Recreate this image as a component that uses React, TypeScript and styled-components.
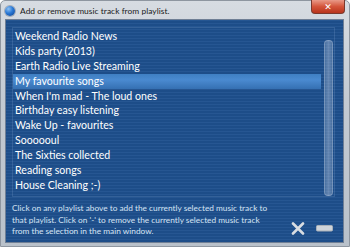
import React from "react";
import styled, { createGlobalStyle } from "styled-components";

const Global = createGlobalStyle`
  html, body { margin: 0; padding: 0; }
  body { width: 350px; height: 247px; overflow: hidden; background: #fff; }
`;

const Window = styled.div`
  width: 350px;
  height: 247px;
  box-sizing: border-box;
  display: flex;
  flex-direction: column;
  background: linear-gradient(180deg, #d7dce2 0%, #c3cad2 40%, #b9c1ca 100%);
  border: 1px solid #8e96a0;
  border-radius: 5px 5px 0 0;
  font-family: Lato, "Noto Sans", sans-serif;
`;

const TitleBar = styled.div`
  height: 18px;
  display: flex;
  align-items: center;
  padding-left: 4px;
  gap: 5px;
`;

const AppIcon = styled.div`
  width: 10px;
  height: 10px;
  border-radius: 50%;
  background: radial-gradient(circle at 35% 30%, #8fc3f5 0%, #2a78d4 45%, #0c3f8c 100%);
  box-shadow: 0 0 0 1px rgba(40, 60, 90, 0.3);
  margin-top: 2px;
`;

const Title = styled.div`
  font-size: 8.4px;
  color: #1a1a1a;
  margin-top: 2px;
  letter-spacing: 0.05px;
`;

const CloseButton = styled.div`
  margin-left: auto;
  align-self: flex-start;
  width: 32px;
  height: 13px;
  margin-top: -1px;
  margin-right: 4px;
  border-radius: 0 0 4px 4px;
  background: linear-gradient(180deg, #e99a88 0%, #d4553b 50%, #b8341c 100%);
  border: 1px solid #7a3a2e;
  border-top: none;
  display: flex;
  align-items: center;
  justify-content: center;
  color: #fff;
  font-family: "DejaVu Sans", sans-serif;
  font-size: 9px;
  font-weight: bold;
`;

const Content = styled.div`
  flex: 1;
  min-height: 0;
  margin: 0 5px 3px 4px;
  border: 1px solid #6f7f95;
  background-color: #1e508e;
  background-image: repeating-linear-gradient(
    180deg,
    rgba(255, 255, 255, 0.035) 0px,
    rgba(255, 255, 255, 0.035) 1px,
    rgba(0, 0, 0, 0.04) 1px,
    rgba(0, 0, 0, 0.04) 3px
  );
  display: flex;
  flex-direction: column;
  padding: 7px 8px 0 6px;
  box-sizing: border-box;
`;

const ListBox = styled.div`
  height: 168px;
  flex: none;
  border: 1px solid rgba(160, 190, 225, 0.18);
  display: flex;
`;

const List = styled.div`
  flex: 1;
  padding-top: 1px;
  display: flex;
  flex-direction: column;
`;

const Row = styled.div<{ $selected?: boolean }>`
  height: 14.9px;
  line-height: 14.9px;
  padding-left: 2px;
  font-size: 10.6px;
  color: #fff;
  white-space: nowrap;
  background: ${(p) =>
    p.$selected
      ? "linear-gradient(180deg, #3f7fc2 0%, #4a8ad0 40%, #3570b2 100%)"
      : "transparent"};
`;

const ScrollTrack = styled.div`
  width: 9px;
  margin: 12px 1px 0 3px;
  display: flex;
  flex-direction: column;
`;

const ScrollThumb = styled.div`
  flex: 1;
  border-radius: 4px;
  background: linear-gradient(90deg, rgba(190, 205, 225, 0.28), rgba(220, 230, 245, 0.38), rgba(190, 205, 225, 0.28));
  border: 1px solid rgba(210, 220, 235, 0.3);
`;

const Footer = styled.div`
  flex: 1;
  display: flex;
  align-items: flex-start;
  padding-top: 6px;
`;

const HelpText = styled.div`
  flex: 1;
  font-size: 8.3px;
  line-height: 11.5px;
  color: #d6e4f4;
  white-space: nowrap;
`;

const Actions = styled.div`
  display: flex;
  align-items: center;
  gap: 11px;
  margin-top: 19px;
  margin-right: 2px;
`;

const IconButton = styled.div`
  display: flex;
  align-items: center;
  justify-content: center;
`;

const items = [
  "Weekend Radio News",
  "Kids party (2013)",
  "Earth Radio Live Streaming",
  "My favourite songs",
  "When I'm mad - The loud ones",
  "Birthday easy listening",
  "Wake Up - favourites",
  "Soooooul",
  "The Sixties collected",
  "Reading songs",
  "House Cleaning ;-)",
];

export default function App() {
  return (
    <>
      <Global />
      <Window>
        <TitleBar>
          <AppIcon />
          <Title>Add or remove music track from playlist.</Title>
          <CloseButton>✕</CloseButton>
        </TitleBar>
        <Content>
          <ListBox>
            <List>
              {items.map((t, i) => (
                <Row key={t} $selected={i === 3}>
                  {t}
                </Row>
              ))}
            </List>
            <ScrollTrack>
              <ScrollThumb />
            </ScrollTrack>
          </ListBox>
          <Footer>
            <HelpText>
              Click on any playlist above to add the currently selected music track to
              <br />
              that playlist. Click on '-' to remove the currently selected music track
              <br />
              from the selection in the main window.
            </HelpText>
            <Actions>
              <IconButton>
                <svg width="14" height="13" viewBox="0 0 14 13">
                  <path d="M2 1.5 L12 11.5 M12 1.5 L2 11.5" stroke="#d9dde2" strokeWidth="2.6" strokeLinecap="round" />
                </svg>
              </IconButton>
              <IconButton>
                <svg width="17" height="7" viewBox="0 0 17 7">
                  <rect x="0.5" y="0.5" width="16" height="5.5" rx="1" fill="#cfd4da" stroke="#a9b0b8" strokeWidth="1" />
                </svg>
              </IconButton>
            </Actions>
          </Footer>
        </Content>
      </Window>
    </>
  );
}
